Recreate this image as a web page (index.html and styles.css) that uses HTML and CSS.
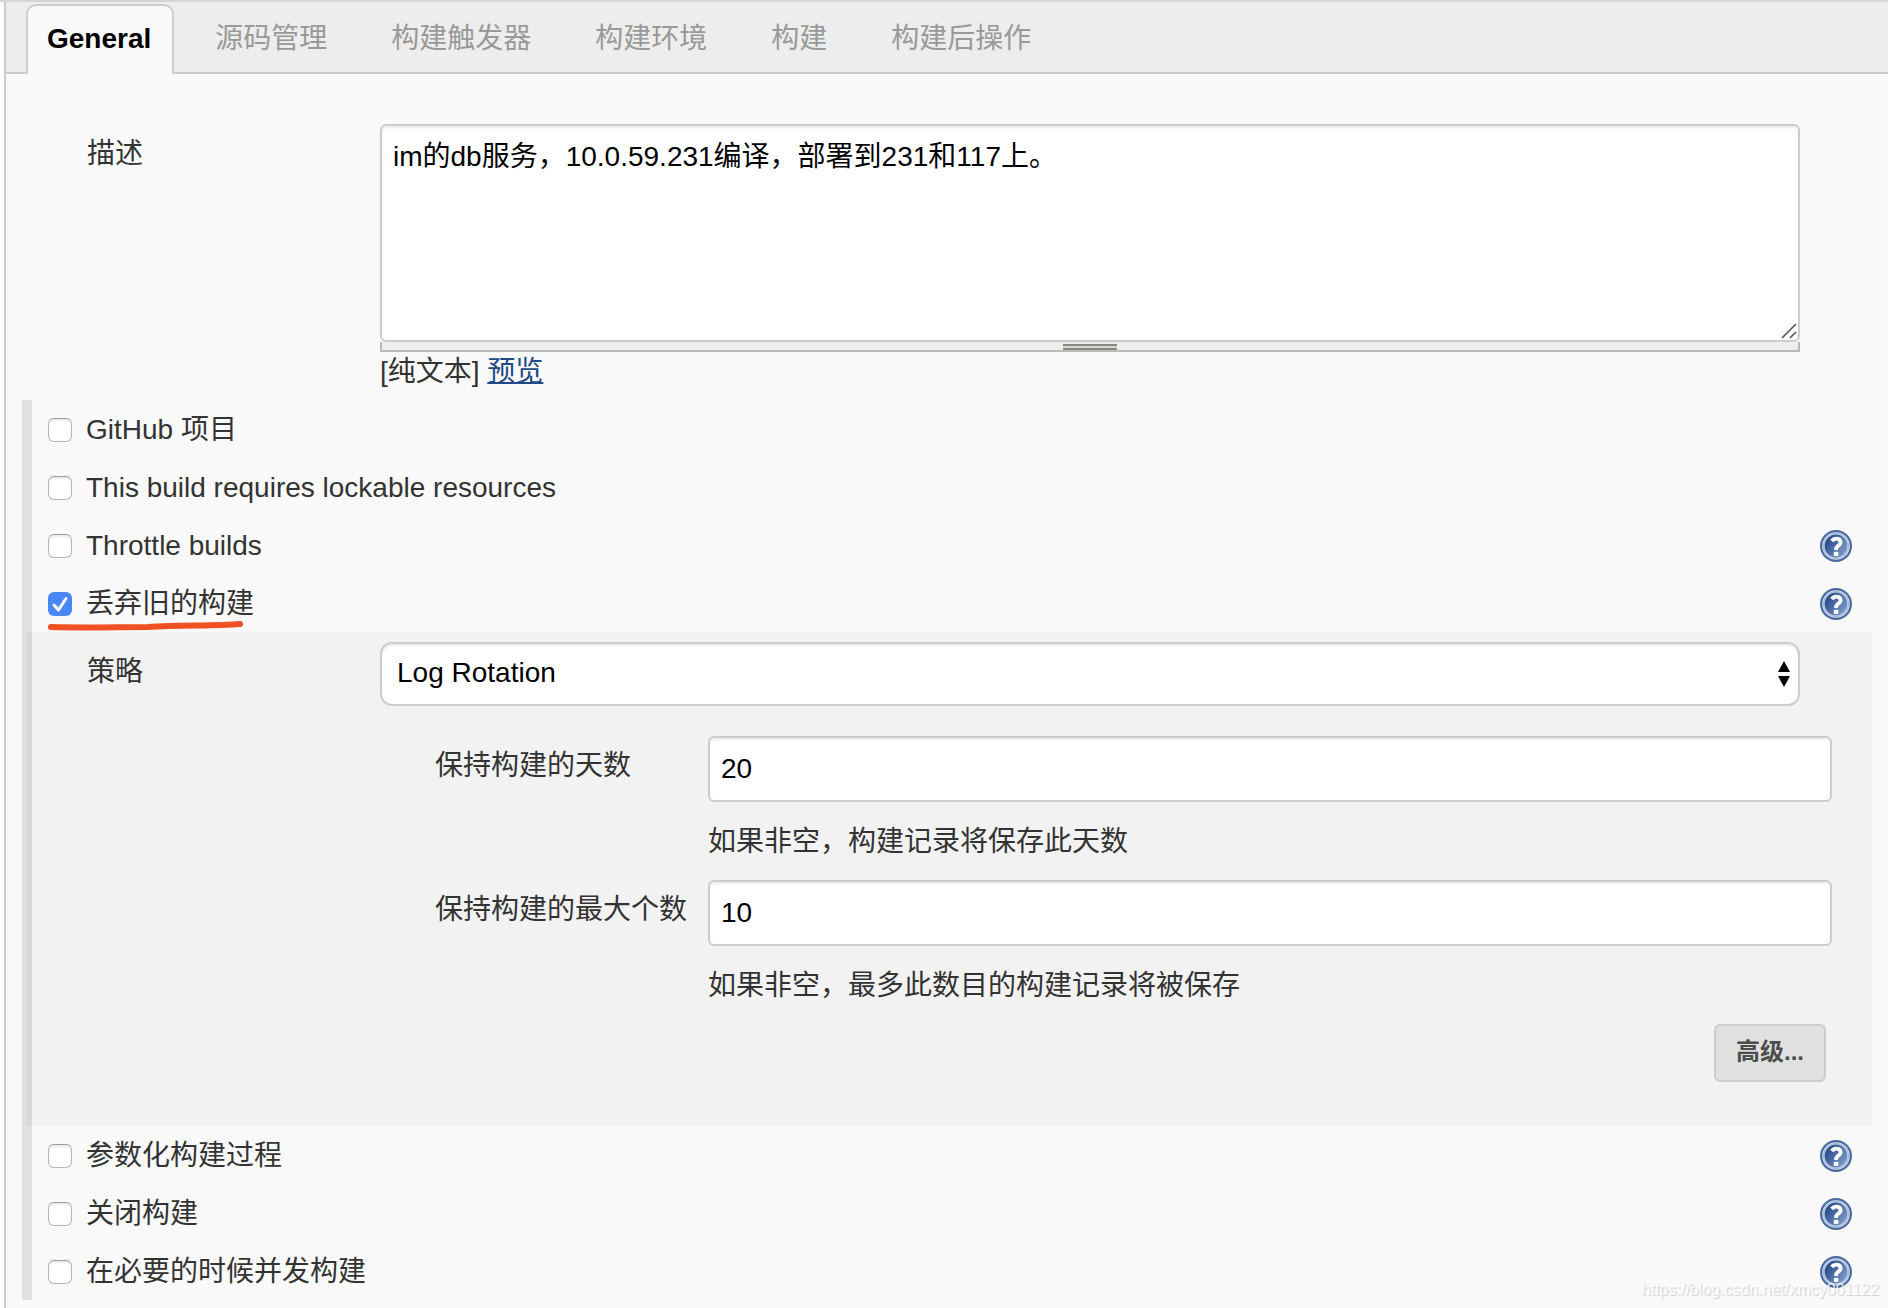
FILE: index.html
```html
<!DOCTYPE html>
<html lang="zh-CN">
<head>
<meta charset="utf-8">
<title>General</title>
<link rel="stylesheet" href="styles.css">
</head>
<body>
<svg class="defs" width="0" height="0" aria-hidden="true">
  <defs>
    <linearGradient id="disc" x1="0" y1="0.2" x2="1" y2="0.9">
      <stop offset="0.15" stop-color="#2c4f8e"/>
      <stop offset="1" stop-color="#8ba9d3"/>
    </linearGradient>
    <symbol id="help" viewBox="0 0 32 32">
      <circle cx="16" cy="16" r="16" fill="#4a6ba3"/>
      <circle cx="16" cy="16" r="12.600" fill="url(#disc)" stroke="#d3dcea" stroke-width="2.400"/>
      <circle cx="16" cy="16" r="12.600" fill="none" stroke="#8fa6cb" stroke-width="0.700"/>
      <path d="M11.8 11Q13.600 8.600 16.600 8.700Q20.600 9 20.600 12.300Q20.500 14.400 18 15.900Q16 17.300 16 20" fill="none" stroke="#fff" stroke-width="3.800"/>
      <rect x="13.800" y="21.800" width="4.600" height="4.200" rx="1" fill="#fff"/>
    </symbol>
  </defs>
</svg>
<main class="config">
  <nav class="tabs">
    <a class="tab active" href="#general">General</a>
    <a class="tab" href="#scm">源码管理</a>
    <a class="tab" href="#triggers">构建触发器</a>
    <a class="tab" href="#environment">构建环境</a>
    <a class="tab" href="#build">构建</a>
    <a class="tab" href="#post-build">构建后操作</a>
  </nav>
  <form class="form" id="general">
    <div class="field description">
      <label class="name" for="description">描述</label>
      <div class="setting">
        <div class="text-area">
          <textarea id="description">im的db服务，10.0.59.231编译，部署到231和117上。</textarea>
          <svg class="corner" width="16" height="16" viewBox="0 0 16 16" aria-hidden="true"><path d="M1 15L15 1M9 15L15 9" stroke="#555" stroke-width="1.6" fill="none"/></svg>
        </div>
        <div class="handle"><span class="grip"></span></div>
        <div class="markup">[纯文本] <a href="#preview">预览</a></div>
      </div>
    </div>
    <div class="options">
      <div class="option"><label><input type="checkbox">GitHub 项目</label></div>
      <div class="option"><label><input type="checkbox">This build requires lockable resources</label></div>
      <div class="option"><label><input type="checkbox">Throttle builds</label><button class="help" type="button" aria-label="帮助"><svg width="32" height="32"><use href="#help"/></svg></button></div>
      <div class="option">
        <label><input type="checkbox" checked>丢弃旧的构建</label>
        <button class="help" type="button" aria-label="帮助"><svg width="32" height="32"><use href="#help"/></svg></button>
        <svg class="underline" width="196" height="12" viewBox="0 0 196 12" aria-hidden="true"><path d="M3 7C35 8 70 7 100 7C135 5 165 6 192 4" fill="none" stroke="#f05023" stroke-width="6" stroke-linecap="round"/></svg>
      </div>
      <div class="nested">
        <div class="field">
          <label class="name" for="strategy">策略</label>
          <div class="setting select">
            <select id="strategy"><option>Log Rotation</option></select>
            <svg class="arrows" width="14" height="28" viewBox="0 0 14 28" aria-hidden="true"><path d="M7 1L13 12H1ZM7 27L13 16H1Z"/></svg>
          </div>
        </div>
        <div class="rotation">
          <label for="days">保持构建的天数</label>
          <input type="text" id="days" value="20">
          <p class="hint">如果非空，构建记录将保存此天数</p>
          <label for="count">保持构建的最大个数</label>
          <input type="text" id="count" value="10">
          <p class="hint">如果非空，最多此数目的构建记录将被保存</p>
        </div>
        <div class="actions"><button class="advanced" type="button">高级...</button></div>
      </div>
      <div class="option"><label><input type="checkbox">参数化构建过程</label><button class="help" type="button" aria-label="帮助"><svg width="32" height="32"><use href="#help"/></svg></button></div>
      <div class="option"><label><input type="checkbox">关闭构建</label><button class="help" type="button" aria-label="帮助"><svg width="32" height="32"><use href="#help"/></svg></button></div>
      <div class="option"><label><input type="checkbox">在必要的时候并发构建</label><button class="help" type="button" aria-label="帮助"><svg width="32" height="32"><use href="#help"/></svg></button></div>
    </div>
  </form>
</main>
<div class="watermark">https://blog.csdn.net/xmcy001122</div>
</body>
</html>
```
FILE: styles.css
```css
* {
  box-sizing: border-box;
}

body {
  position: relative;
  margin: 0;
  min-height: 100vh;
  display: flex;
  flex-direction: column;
  border-top: 2px solid #d6d6cf;
  background: #fff;
  color: #333;
  font: 28px/40px "Liberation Sans", "Noto Sans CJK SC", sans-serif;
}

input,
select,
textarea,
button {
  margin: 0;
  font: inherit;
}

.defs {
  position: absolute;
}

.config {
  flex: 1;
  margin-left: 4px;
  border-left: 2px solid #ccc;
  background: #f9f9f9;
}

/* Tab bar */
.tabs {
  display: flex;
  gap: 20px;
  height: 72px;
  padding: 2px 20px 0;
  border-bottom: 2px solid #ccc;
  background: #ededed;
}

.tab {
  height: 70px;
  padding: 13px 21px 13px 19px;
  border: 2px solid transparent;
  border-bottom: 0;
  border-radius: 10px 10px 0 0;
  color: #999;
  text-decoration: none;
  white-space: nowrap;
}

.tab.active {
  border-color: #ccc;
  background: #f9f9f9;
  color: #000;
  font-weight: bold;
}

/* Form rows */
.field {
  display: flex;
}

.name {
  flex: none;
  width: 293px;
}

.setting {
  flex: 1;
  min-width: 0;
}

.description {
  padding: 50px 88px 8px 81px;
}

.description .name {
  padding-top: 10px;
}

.text-area {
  position: relative;
}

textarea {
  display: block;
  width: 100%;
  height: 218px;
  padding: 11px;
  resize: none;
}

.corner {
  position: absolute;
  right: 3px;
  bottom: 3px;
}

textarea,
input[type="text"],
select {
  border: 2px solid #ccc;
  border-radius: 6px;
  background: #fff;
  box-shadow: inset 0 2px 2px rgba(0, 0, 0, 0.075);
  color: #000;
  outline: 0;
}

.handle {
  display: flex;
  justify-content: center;
  height: 10px;
  padding-top: 2px;
  border: 2px solid #babab2;
  border-top: 0;
  background: #ededed;
}

.grip {
  width: 54px;
  height: 6px;
  border: solid #888882;
  border-width: 2px 0;
  background: #d6d6cf;
}

.markup a {
  color: #204a87;
  text-decoration-thickness: 2px;
}

/* Optional blocks */
.options {
  margin-left: 16px;
  border-left: 10px solid #e0e0e0;
}

.option {
  position: relative;
  display: flex;
  align-items: center;
  justify-content: space-between;
  height: 58px;
  padding: 2px 36px 0 16px;
}

.option label {
  display: flex;
  align-items: center;
  gap: 14px;
}

input[type="checkbox"] {
  appearance: none;
  width: 24px;
  height: 24px;
  border: 1px solid #b4b4b4;
  border-top-color: #999;
  border-radius: 6px;
  background: #fff;
  box-shadow: inset 0 2px 2px rgba(0, 0, 0, 0.08);
}

input[type="checkbox"]:checked {
  border: 0;
  background: #4b88f7 url("data:image/svg+xml,%3Csvg xmlns='http://www.w3.org/2000/svg' viewBox='0 0 24 24'%3E%3Cpath d='M6 13L10.500 18L18 6.500' fill='none' stroke='white' stroke-width='3' stroke-linecap='round' stroke-linejoin='round'/%3E%3C/svg%3E");
  box-shadow: none;
}

.help {
  width: 32px;
  height: 32px;
  padding: 0;
  border: 0;
  background: none;
}

.help svg {
  display: block;
}

.underline {
  position: absolute;
  left: 16px;
  bottom: 0;
}

.nested {
  margin: 0 16px 0 -6px;
  padding: 10px 40px 44px 61px;
  background: rgba(0, 0, 0, 0.027);
}

.nested .field {
  padding-right: 32px;
}

.nested .name {
  padding-top: 10px;
}

.select {
  position: relative;
}

select {
  display: block;
  appearance: none;
  width: 100%;
  height: 64px;
  padding: 0 15px 2px;
  border-radius: 12px;
}

.arrows {
  position: absolute;
  right: 9px;
  top: 18px;
}

.rotation {
  display: grid;
  grid-template-columns: 273px 1fr;
  margin: 30px 0 18px 348px;
}

.rotation label {
  padding-top: 10px;
}

.rotation input {
  width: 100%;
  height: 66px;
  padding: 0 11px;
}

.hint {
  grid-column: 2;
  margin: 0;
  padding: 20px 0 18px;
}

.actions {
  display: flex;
  justify-content: flex-end;
  padding-right: 6px;
}

.rotation .hint:last-child {
  padding-bottom: 0;
}

.advanced {
  height: 58px;
  padding: 0 20px 2px;
  border: 2px solid #ccc;
  border-radius: 6px;
  background: #e0e0e0;
  color: #4d4d4d;
  font-size: 24px;
  font-weight: bold;
}

.watermark {
  position: absolute;
  right: 9px;
  bottom: 8px;
  color: rgba(255, 255, 255, 0.8);
  font-size: 16px;
  line-height: 20px;
  text-shadow: 1px 1px 1px rgba(0, 0, 0, 0.18);
}
```
